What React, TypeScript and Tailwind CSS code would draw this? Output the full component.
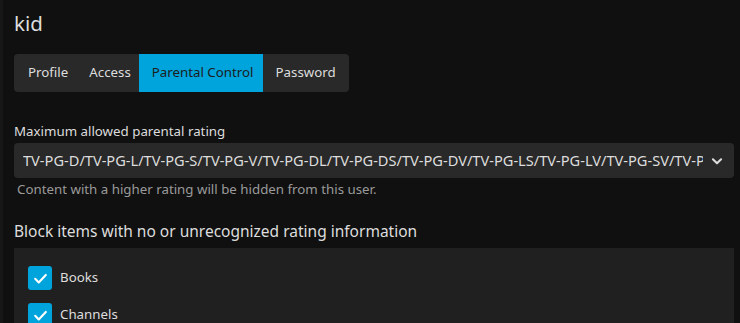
import React from "react";

function Check() {
  return (
    <span className="flex h-[24px] w-[24px] items-center justify-center rounded-[3px] bg-[#00a4dc]">
      <svg width="17" height="17" viewBox="0 0 24 24" fill="none" stroke="#ffffff" strokeWidth="3" strokeLinecap="round" strokeLinejoin="round">
        <path d="M4.5 12.5l5 5L19.5 7" />
      </svg>
    </span>
  );
}

export default function App() {
  const tabs = [
    { t: "Profile", c: "pl-[14px] pr-[10px]" },
    { t: "Access", c: "pl-[11px] pr-[8px]" },
    { t: "Parental Control", c: "pl-[13px] pr-[9px] bg-[#00a4dc] text-[#1c1c1c]" },
    { t: "Password", c: "pl-[13px] pr-[13px]" },
  ];
  return (
    <div
      className="h-[323px] w-[740px] overflow-hidden border-l-[3px] border-[#171717] bg-[#101010] text-[#dddddd]"
      style={{ fontFamily: '"Noto Sans", sans-serif' }}
    >
      <div className="pl-[11px] pr-[6px]">
        <h2 className="pt-[8px] text-[20.5px] leading-[30px]">kid</h2>
        <div className="mt-[16px] flex h-[38px] w-[335px] items-stretch overflow-hidden rounded-[4px] bg-[#292929] text-[13.3px]">
          {tabs.map(({ t, c }) => (
            <div key={t} className={"flex items-center whitespace-nowrap " + c}>
              {t}
            </div>
          ))}
        </div>
        <div className="mt-[29px] text-[13.3px] leading-[20px]">Maximum allowed parental rating</div>
        <div className="mt-[2px] flex h-[35px] w-[720px] items-center justify-between rounded-[4px] bg-[#292929] pl-[9px] pr-[10px]">
          <span className="overflow-hidden whitespace-nowrap text-[14.6px]" style={{ maxWidth: 680 }}>
            TV-PG-D/TV-PG-L/TV-PG-S/TV-PG-V/TV-PG-DL/TV-PG-DS/TV-PG-DV/TV-PG-LS/TV-PG-LV/TV-PG-SV/TV-PG-DLS
          </span>
          <svg width="14" height="14" viewBox="0 0 24 24" fill="none" stroke="#dddddd" strokeWidth="3.5" strokeLinecap="round" strokeLinejoin="round">
            <path d="M5 9l7 7 7-7" />
          </svg>
        </div>
        <div className="mt-[1px] pl-[3px] text-[13.3px] leading-[20px] text-[#9a9a9a]">
          Content with a higher rating will be hidden from this user.
        </div>
        <div className="mt-[20px] text-[15.5px] leading-[24px]">Block items with no or unrecognized rating information</div>
        <div className="mt-[5px] h-[100px] w-[720px] bg-[#202020] px-[14px] pt-[18px] text-[13.3px]">
          <div className="flex items-center gap-[8px]">
            <Check />
            <span>Books</span>
          </div>
          <div className="mt-[13px] flex items-center gap-[8px]">
            <Check />
            <span>Channels</span>
          </div>
        </div>
      </div>
    </div>
  );
}
